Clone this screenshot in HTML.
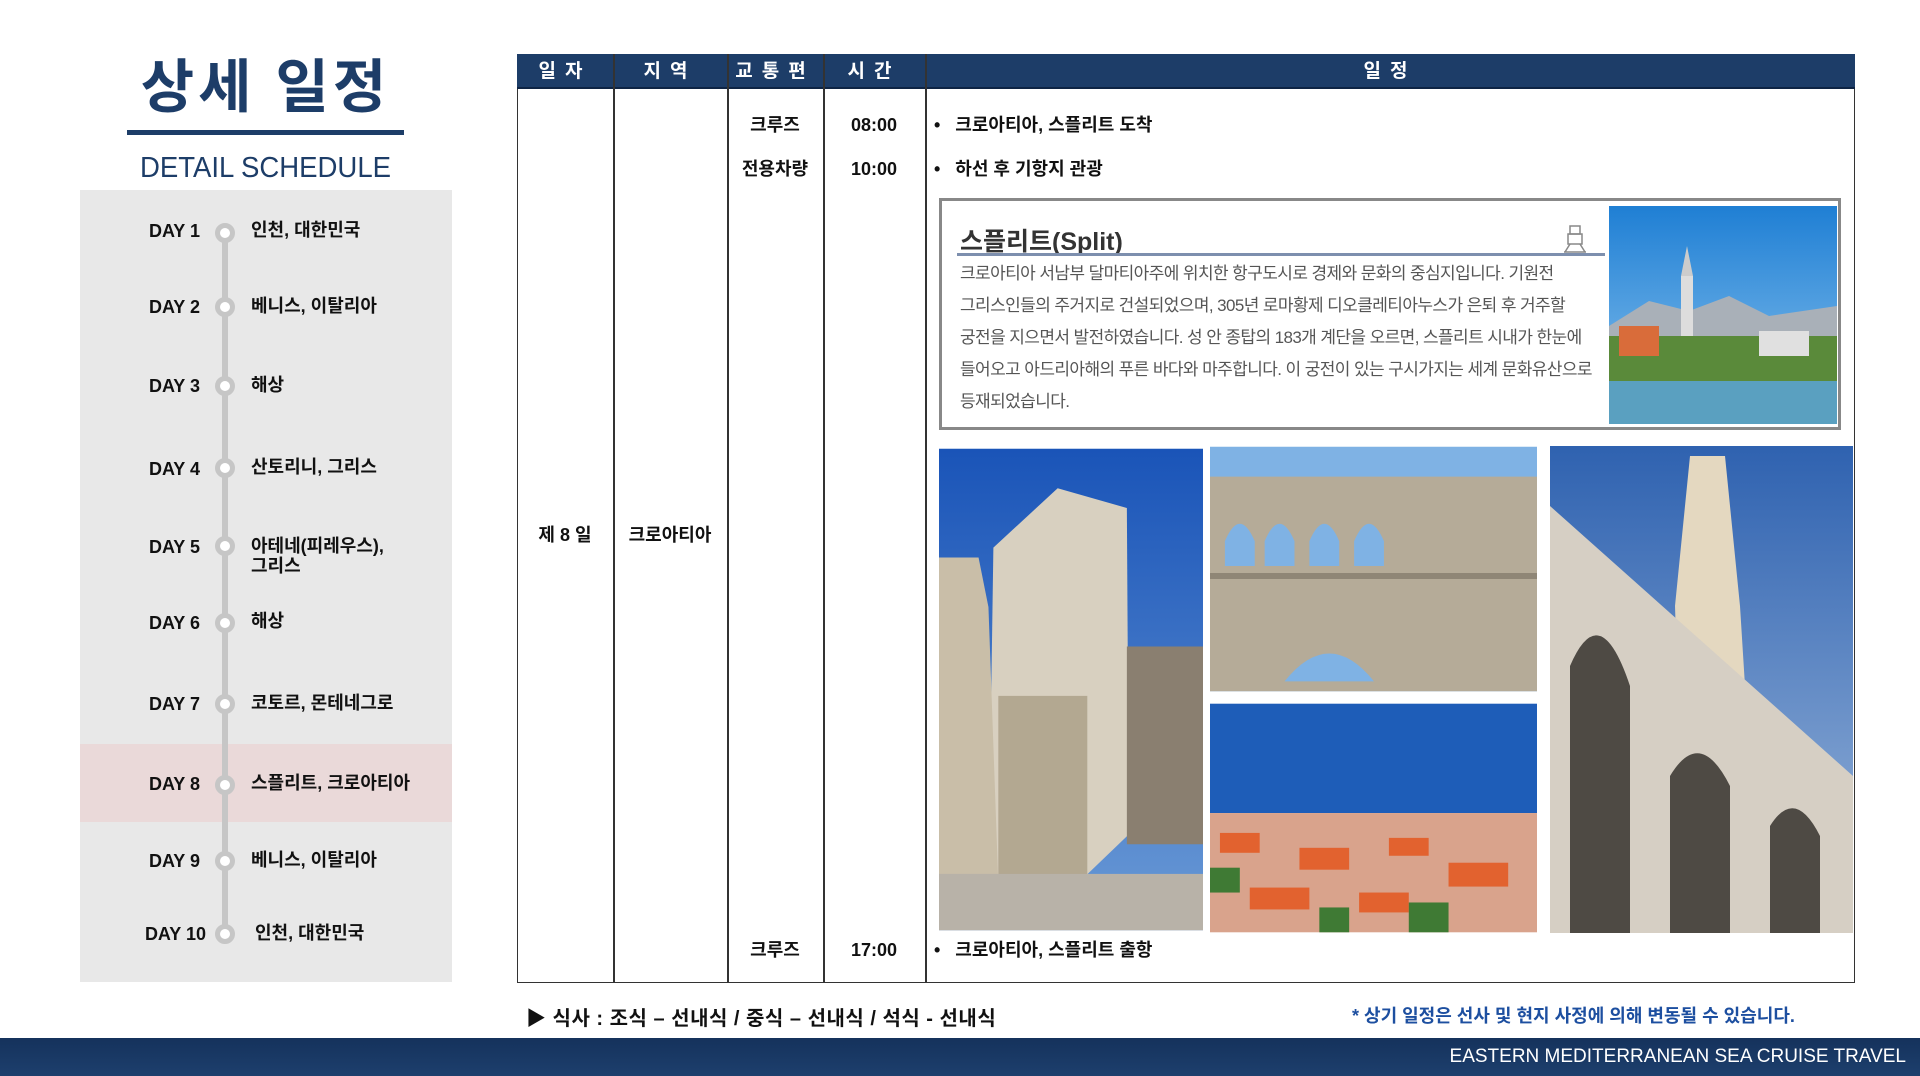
<!DOCTYPE html>
<html><head><meta charset="utf-8"><style>
*{margin:0;padding:0;box-sizing:border-box}
body{width:1920px;height:1076px;background:#fff;position:relative;overflow:hidden;font-family:"Liberation Sans","Noto Sans CJK KR",sans-serif;color:#111}
.a{position:absolute}
.title{left:127px;width:277px;top:52px;text-align:center;font-size:58px;font-weight:700;color:#1d3d68;letter-spacing:4px;line-height:72px}
.uline{left:127px;top:130px;width:277px;height:5px;background:#1d3d68}
.sub{left:127px;width:277px;top:150px;text-align:center;font-size:29px;color:#1d3d68;line-height:36px;transform:scaleX(0.95)}
.panel{left:80px;top:190px;width:372px;height:792px;background:#e8e8e8}
.hl{left:80px;top:744px;width:372px;height:78px;background:#ead9d9}
.tl{left:222px;top:230px;width:6px;height:705px;background:#c6c6c6}
.dot{width:20px;height:20px;border-radius:50%;background:#fff;border:5px solid #c6c6c6}
.dl{font-size:18px;font-weight:700;width:120px;text-align:right;left:80px;line-height:22px}
.dn{font-size:18px;font-weight:700;left:251px;line-height:20px}
.tbl{left:517px;top:54px;width:1338px;height:929px;border:1.5px solid #333;border-top:none}
.hdr{left:517px;top:54px;width:1338px;height:35px;background:#1d3d68;border-bottom:2px solid #0e2444}
.hc{top:54px;height:35px;line-height:35px;color:#fff;font-weight:700;font-size:19px;text-align:center;letter-spacing:9px}
.vl{top:54px;width:1.5px;height:929px;background:#333}
.c{font-size:18px;font-weight:700;text-align:center;line-height:22px}
.bx{left:939px;top:198px;width:902px;height:232px;border:3px solid #888;background:#fff}
.para{left:960px;top:258px;width:642px;font-size:17px;line-height:32px;color:#555;letter-spacing:-0.6px;word-break:keep-all}
.foot{left:0;top:1038px;width:1920px;height:38px;background:linear-gradient(#15325c,#1d3f6d)}
</style></head><body>
<div class="a title">상세 일정</div>
<div class="a uline"></div>
<div class="a sub">DETAIL SCHEDULE</div>
<div class="a panel"></div>
<div class="a hl"></div>
<div class="a tl"></div>

<div class="a dl" style="top:220px">DAY 1</div><div class="a dot" style="left:215px;top:223px"></div><div class="a dn" style="top:220px">인천, 대한민국</div>
<div class="a dl" style="top:296px">DAY 2</div><div class="a dot" style="left:215px;top:297px"></div><div class="a dn" style="top:296px">베니스, 이탈리아</div>
<div class="a dl" style="top:375px">DAY 3</div><div class="a dot" style="left:215px;top:376px"></div><div class="a dn" style="top:375px">해상</div>
<div class="a dl" style="top:458px">DAY 4</div><div class="a dot" style="left:215px;top:458px"></div><div class="a dn" style="top:457px">산토리니, 그리스</div>
<div class="a dl" style="top:536px">DAY 5</div><div class="a dot" style="left:215px;top:536px"></div><div class="a dn" style="top:536px">아테네(피레우스),<br>그리스</div>
<div class="a dl" style="top:612px">DAY 6</div><div class="a dot" style="left:215px;top:613px"></div><div class="a dn" style="top:611px">해상</div>
<div class="a dl" style="top:693px">DAY 7</div><div class="a dot" style="left:215px;top:694px"></div><div class="a dn" style="top:693px">코토르, 몬테네그로</div>
<div class="a dl" style="top:773px">DAY 8</div><div class="a dot" style="left:215px;top:775px"></div><div class="a dn" style="top:773px">스플리트, 크로아티아</div>
<div class="a dl" style="top:850px">DAY 9</div><div class="a dot" style="left:215px;top:851px"></div><div class="a dn" style="top:850px">베니스, 이탈리아</div>
<div class="a dl" style="top:923px;left:86px">DAY 10</div><div class="a dot" style="left:215px;top:924px"></div><div class="a dn" style="top:923px;left:255px">인천, 대한민국</div>

<div class="a tbl"></div>
<div class="a hdr"></div>
<div class="a hc" style="left:517px;width:96px">일자</div>
<div class="a hc" style="left:613px;width:114px">지역</div>
<div class="a hc" style="left:727px;width:96px">교통편</div>
<div class="a hc" style="left:823px;width:102px">시간</div>
<div class="a hc" style="left:925px;width:930px">일정</div>
<div class="a vl" style="left:613px"></div>
<div class="a vl" style="left:727px"></div>
<div class="a vl" style="left:823px"></div>
<div class="a vl" style="left:925px"></div>

<div class="a c" style="left:517px;width:96px;top:524px">제 8 일</div>
<div class="a c" style="left:613px;width:114px;top:524px">크로아티아</div>
<div class="a c" style="left:727px;width:96px;top:114px">크루즈</div>
<div class="a c" style="left:823px;width:102px;top:114px">08:00</div>
<div class="a c" style="left:727px;width:96px;top:158px">전용차량</div>
<div class="a c" style="left:823px;width:102px;top:158px">10:00</div>
<div class="a c" style="left:727px;width:96px;top:939px">크루즈</div>
<div class="a c" style="left:823px;width:102px;top:939px">17:00</div>
<div class="a c" style="left:934px;top:114px;text-align:left">•&nbsp;&nbsp; 크로아티아, 스플리트 도착</div>
<div class="a c" style="left:934px;top:158px;text-align:left">•&nbsp;&nbsp; 하선 후 기항지 관광</div>
<div class="a c" style="left:934px;top:939px;text-align:left">•&nbsp;&nbsp; 크로아티아, 스플리트 출항</div>

<div class="a bx"></div>
<div class="a" style="left:960px;top:222px;font-size:25px;font-weight:700;color:#333">스플리트(Split)</div>
<div class="a" style="left:957px;top:253px;width:648px;height:3px;background:#7d8fae"></div>
<svg class="a" style="left:1562px;top:224px" width="26" height="30" viewBox="0 0 26 30"><g fill="none" stroke="#888" stroke-width="1.5"><rect x="8" y="2" width="10" height="8"/><rect x="6" y="10" width="14" height="10"/><path d="M3 28 L8 20 M23 28 L18 20 M2 28 H24"/></g></svg>
<div class="a para">크로아티아 서남부 달마티아주에 위치한 항구도시로 경제와 문화의 중심지입니다. 기원전 그리스인들의 주거지로 건설되었으며, 305년 로마황제 디오클레티아누스가 은퇴 후 거주할 궁전을 지으면서 발전하였습니다. 성 안 종탑의 183개 계단을 오르면, 스플리트 시내가 한눈에 들어오고 아드리아해의 푸른 바다와 마주합니다. 이 궁전이 있는 구시가지는 세계 문화유산으로 등재되었습니다.</div>
<svg class="a" style="left:1609px;top:206px" width="228" height="218" viewBox="0 0 228 218">
<defs><linearGradient id="s1" x1="0" y1="0" x2="0" y2="1"><stop offset="0" stop-color="#1f7fd4"/><stop offset="1" stop-color="#8cc4ee"/></linearGradient></defs>
<rect width="228" height="218" fill="url(#s1)"/>
<path d="M0 120 L40 95 L80 105 L120 90 L160 110 L228 100 L228 150 L0 150Z" fill="#a9b0b8"/>
<rect x="72" y="70" width="12" height="90" fill="#ddd"/><path d="M72 70 L78 40 L84 70Z" fill="#ccc"/>
<rect x="0" y="130" width="228" height="45" fill="#5a8a3a"/>
<rect x="10" y="120" width="40" height="30" fill="#d96c3a"/><rect x="150" y="125" width="50" height="25" fill="#e0e0e0"/>
<rect x="0" y="175" width="228" height="43" fill="#5aa0c0"/>
</svg>

<svg class="a" style="left:939px;top:446px" width="264" height="487" viewBox="0 0 267 487">
<defs><linearGradient id="p1" x1="0" y1="0" x2="0" y2="1"><stop offset="0" stop-color="#1a54b8"/><stop offset="1" stop-color="#6a9ad6"/></linearGradient></defs>
<rect width="267" height="487" fill="url(#p1)"/>
<path d="M55 100 L120 40 L190 60 L192 390 L140 440 L50 440Z" fill="#d8d0c0"/>
<path d="M0 110 L40 110 L50 160 L60 440 L0 450Z" fill="#c9bea8"/>
<path d="M60 250 L150 250 L150 440 L60 440Z" fill="#b3a891"/>
<path d="M190 200 L267 200 L267 400 L190 400Z" fill="#8a7f70"/>
<rect x="0" y="430" width="267" height="57" fill="#b8b2a8"/>
</svg>
<svg class="a" style="left:1210px;top:446px" width="327" height="246" viewBox="0 0 329 246">
<rect width="329" height="246" fill="#7fb2e4"/>
<path d="M0 30 L329 30 L329 246 L0 246Z" fill="#b5ab98"/>
<g fill="#7fb2e4"><path d="M15 95 Q30 60 45 95 V120 H15Z"/><path d="M55 95 Q70 60 85 95 V120 H55Z"/><path d="M100 95 Q115 60 130 95 V120 H100Z"/><path d="M145 95 Q160 60 175 95 V120 H145Z"/><path d="M75 236 Q120 180 165 236Z"/></g>
<path d="M0 130 H329" stroke="#8f8676" stroke-width="6"/>
</svg>
<svg class="a" style="left:1210px;top:703px" width="327" height="230" viewBox="0 0 329 230">
<rect width="329" height="110" fill="#1e5db8"/>
<rect y="110" width="329" height="120" fill="#d9a38c"/>
<g fill="#e2622f"><rect x="10" y="130" width="40" height="20"/><rect x="90" y="145" width="50" height="22"/><rect x="180" y="135" width="40" height="18"/><rect x="240" y="160" width="60" height="24"/><rect x="40" y="185" width="60" height="22"/><rect x="150" y="190" width="50" height="20"/></g>
<g fill="#3f7a34"><rect x="0" y="165" width="30" height="25"/><rect x="200" y="200" width="40" height="30"/><rect x="110" y="205" width="30" height="25"/></g>
</svg>
<svg class="a" style="left:1549px;top:446px" width="305" height="487" viewBox="0 0 303 487">
<defs><linearGradient id="p4" x1="0" y1="0" x2="0" y2="1"><stop offset="0" stop-color="#2f62b0"/><stop offset="1" stop-color="#9cb8dc"/></linearGradient></defs>
<rect width="303" height="487" fill="url(#p4)"/>
<path d="M140 10 L175 10 L190 160 L200 320 L130 320 L125 160Z" fill="#e4d8c0"/>
<path d="M0 60 L303 330 L303 487 L0 487Z" fill="#d6cfc4"/>
<g fill="#4e4a44"><path d="M20 220 Q50 150 80 240 V487 H20Z"/><path d="M120 330 Q150 280 180 340 V487 H120Z"/><path d="M220 380 Q245 340 270 390 V487 H220Z"/></g>
</svg>

<div class="a" style="left:526px;top:1002px;font-size:20px;font-weight:700;letter-spacing:0.5px">▶ 식사 : 조식 – 선내식 / 중식 – 선내식 / 석식 - 선내식</div>
<div class="a" style="left:1352px;top:1002px;font-size:18px;font-weight:700;color:#1d4fa0">* 상기 일정은 선사 및 현지 사정에 의해 변동될 수 있습니다.</div>
<div class="a foot"></div>
<div class="a" style="right:14px;top:1046px;font-size:19px;color:#fff">EASTERN MEDITERRANEAN SEA CRUISE TRAVEL</div>
</body></html>
